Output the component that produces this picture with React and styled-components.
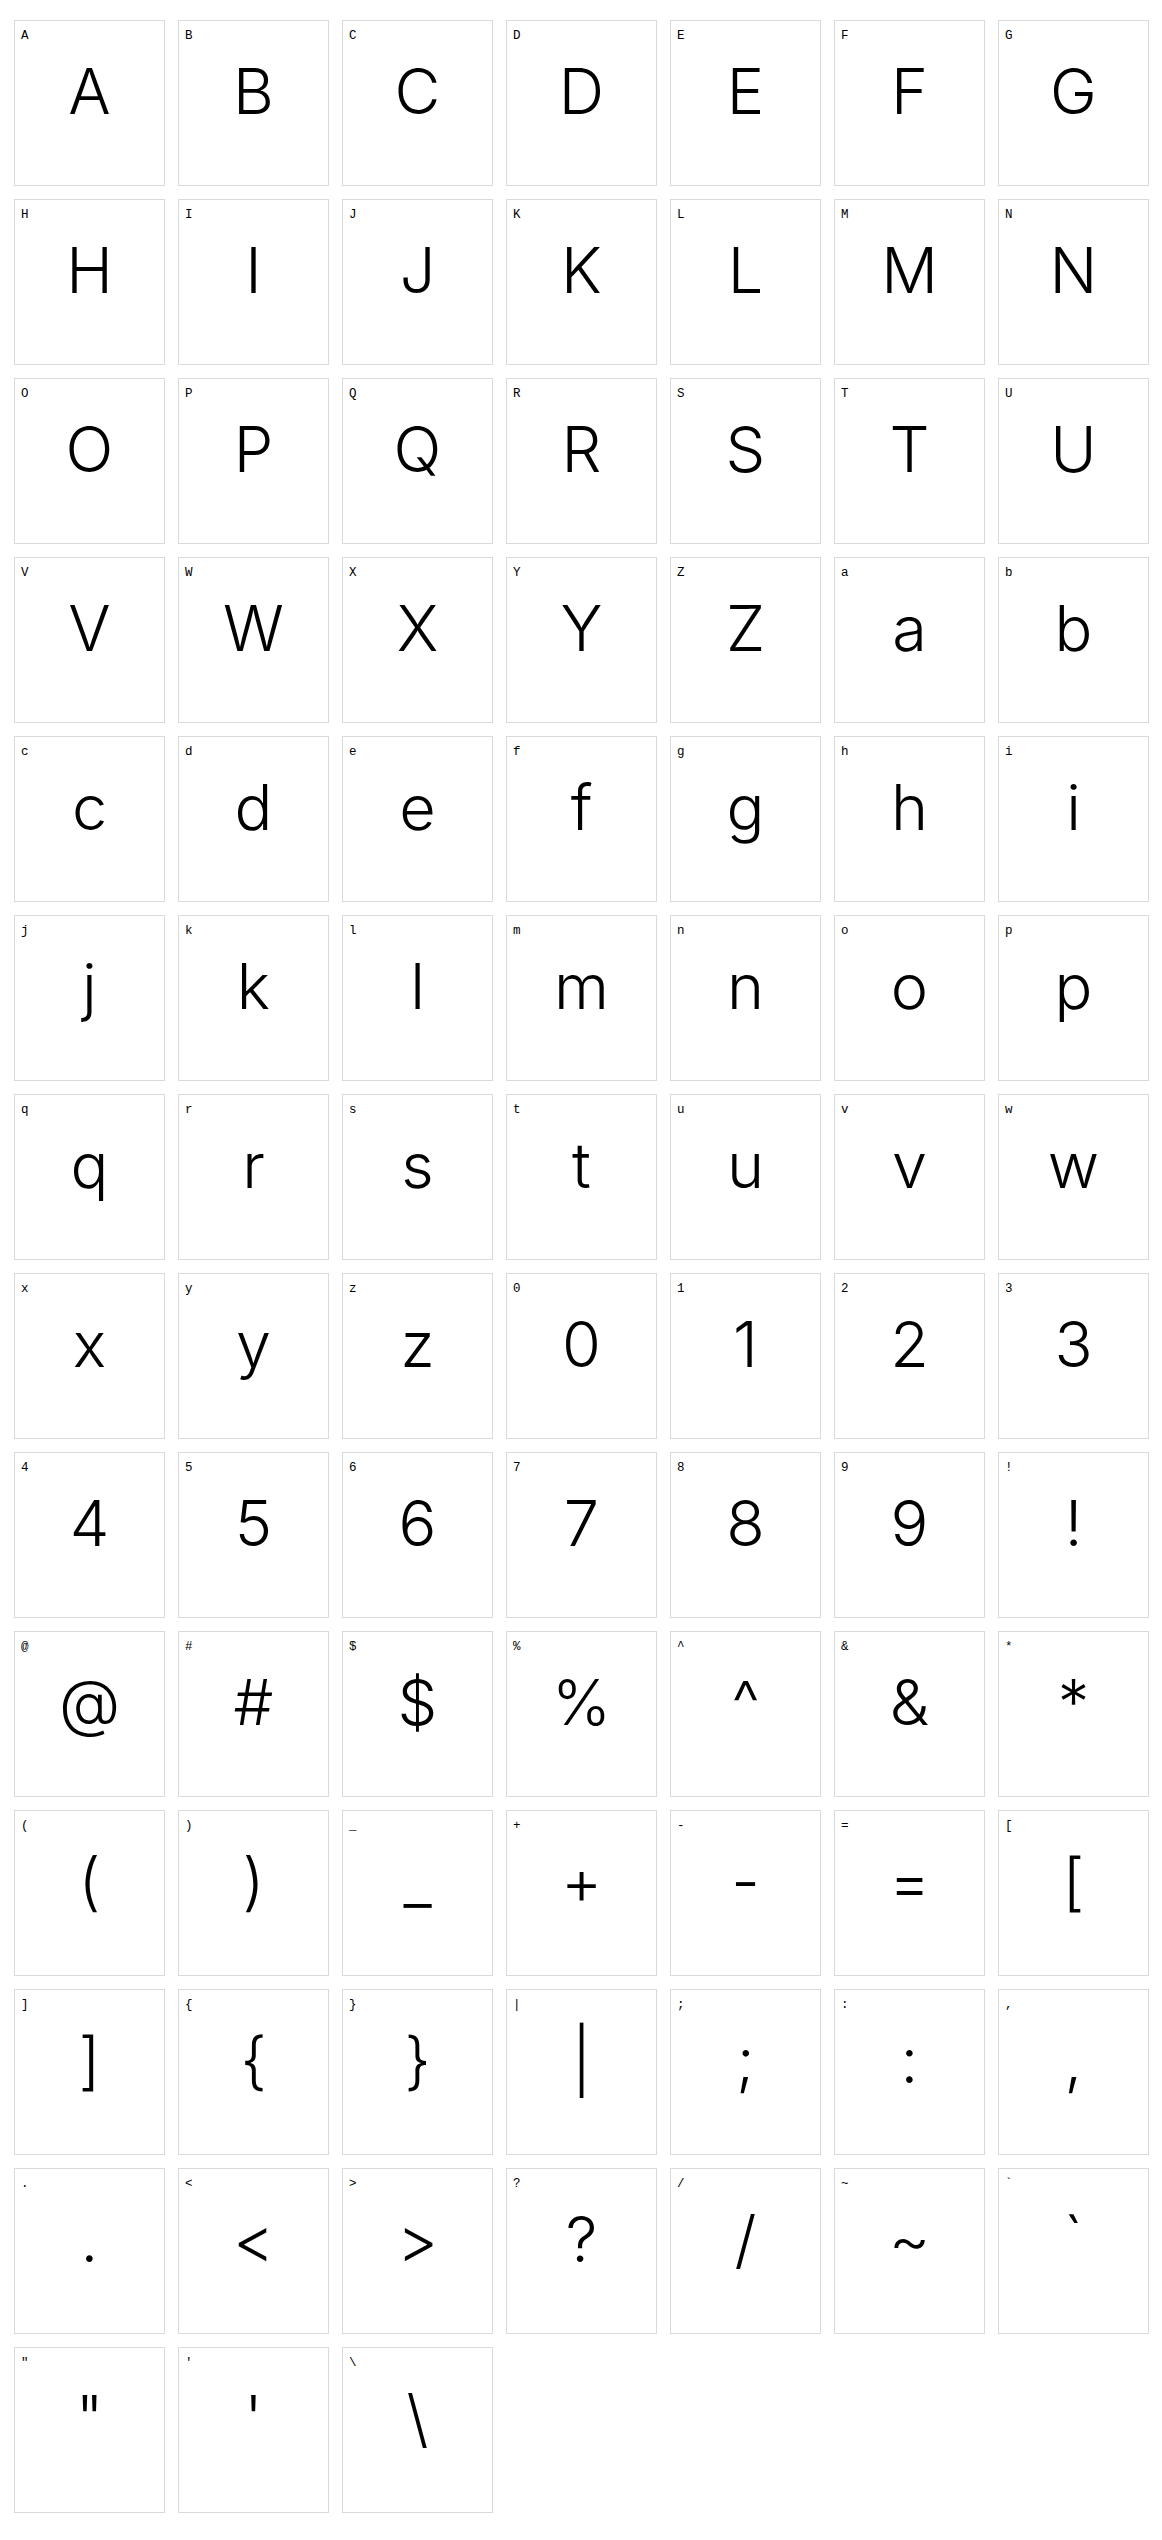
import React from 'react';
import styled, {createGlobalStyle} from 'styled-components';

const GlobalStyle = createGlobalStyle`
    html, body {
        margin:0;
        padding:0;
        background:#fff;
    }
`

const Sheet = styled.div`
    display:grid;
    grid-template-columns:repeat(7, 151px);
    gap:13px;
    padding:20px 13px 28px 14px;
    background:#fff;
`

const Cell = styled.div`
    box-sizing:border-box;
    height:166px;
    border:1px solid #dadada;
    padding:8px 6px 0 6px;
    color:#000;
`

const Label = styled.div`
    font-family:"Liberation Mono", "DejaVu Sans Mono", monospace;
    font-size:12.5px;
    line-height:14px;
    height:14px;
    white-space:pre;
    -webkit-font-smoothing:none;
`

const Glyph = styled.div`
    margin-top:17px;
    font-family:Inter, "Noto Sans", sans-serif;
    font-weight:300;
    font-size:63px;
    line-height:1;
    text-align:center;
    white-space:pre;
`

const chars = [
    ...'ABCDEFGHIJKLMNOPQRSTUVWXYZ',
    ...'abcdefghijklmnopqrstuvwxyz',
    ...'0123456789',
    ...'!@#$%^&*()_+-=[]{}|;:,.<>?/~`"\'\\',
];

const App = () => {
    return (
        <>
            <GlobalStyle />
            <Sheet>
                {chars.map((c, i) => (
                    <Cell key={i}>
                        <Label>{c}</Label>
                        <Glyph>{c}</Glyph>
                    </Cell>
                ))}
            </Sheet>
        </>
    )
}

export default App;
